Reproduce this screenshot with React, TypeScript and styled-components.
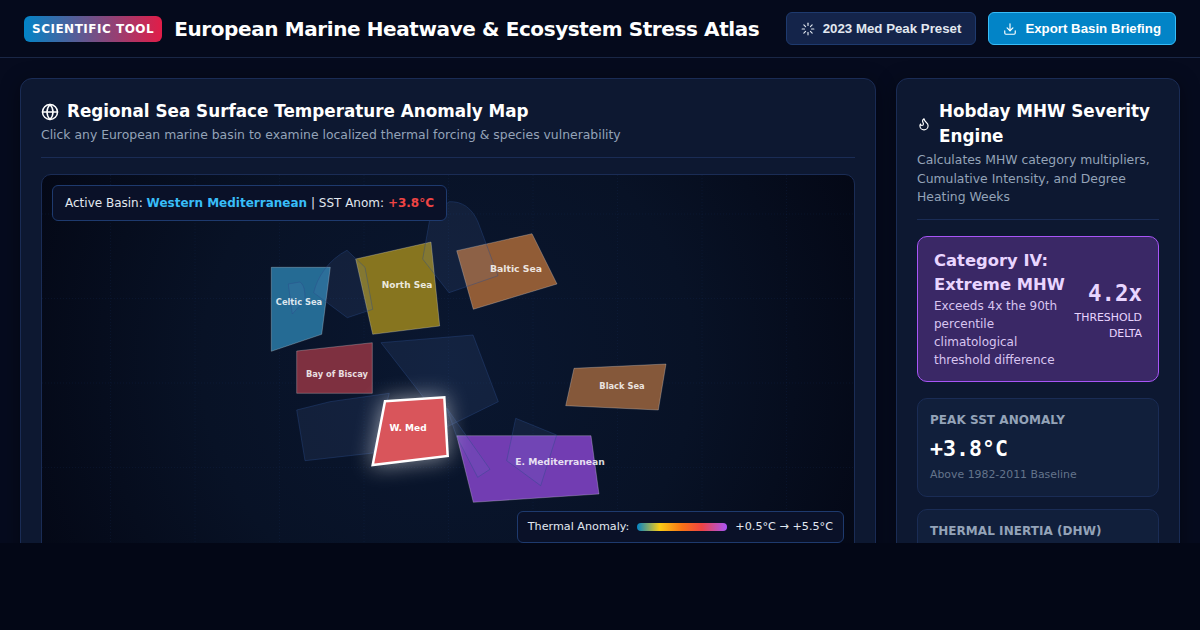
import React from 'react'
import styled, { createGlobalStyle } from 'styled-components'
import { Download, Flame, Globe, Loader } from 'lucide-react'

const GlobalStyle = createGlobalStyle`
  html, body {
    margin: 0;
    background: #030716;
  }
  * { box-sizing: border-box; }
`

const Shell = styled.div`
  height: 543px;
  overflow: hidden;
  background: #060b1e;
  color: #f1f5f9;
  font-family: "DejaVu Sans", sans-serif;
`

const Header = styled.header`
  display: flex;
  align-items: center;
  justify-content: space-between;
  height: 58px;
  padding: 0 24px;
  background: #050a1c;
  border-bottom: 1px solid #1a2746;
`

const Brand = styled.div`
  display: flex;
  align-items: center;
  gap: 12px;
  white-space: nowrap;
`

const Badge = styled.span`
  padding: 5px 8px;
  border-radius: 6px;
  background: linear-gradient(90deg, #0284c7, #e11d48);
  color: #fff;
  font-size: 12px;
  line-height: 16px;
  font-weight: 700;
  letter-spacing: 0.5px;
`

const Title = styled.h1`
  margin: 0;
  font-size: 20px;
  letter-spacing: -0.4px;
  font-weight: 700;
  color: #fff;
`

const Actions = styled.div`
  display: flex;
  gap: 12px;
`

const Button = styled.button<{ $primary?: boolean }>`
  display: flex;
  align-items: center;
  gap: 8px;
  height: 33px;
  padding: 0 14px;
  border-radius: 6px;
  border: 1px solid ${p => (p.$primary ? '#38bdf8' : '#1e3a6e')};
  background: ${p => (p.$primary ? '#0284c7' : '#14244a')};
  color: ${p => (p.$primary ? '#fff' : '#e2e8f0')};
  font-family: "Liberation Sans", Arial, sans-serif;
  font-size: 13.28px;
  font-weight: 700;
  white-space: nowrap;
`

const Main = styled.main`
  display: grid;
  grid-template-columns: 856px 284px;
  gap: 20px;
  padding: 20px;
`

const Card = styled.section`
  padding: 20px;
  border-radius: 12px;
  border: 1px solid #1a2c55;
  background: #0d1831;
  box-shadow: 0 4px 20px rgba(0, 0, 0, 0.4);
  height: 620px;
`

const CardHead = styled.div`
  padding-bottom: 12px;
  margin-bottom: 16px;
  border-bottom: 1px solid #1a2c55;
`

const CardTitle = styled.h2`
  display: flex;
  align-items: center;
  gap: 8px;
  margin: 0 0 2px;
  font-size: 16.8px;
  line-height: 25px;
  font-weight: 700;
  color: #fff;
`

const CardSub = styled.p`
  margin: 0;
  font-size: 12.4px;
  line-height: 18.6px;
  color: #94a3b8;
`

const MapCanvas = styled.div`
  position: relative;
  height: 380px;
  border-radius: 10px;
  border: 1px solid #1a2c55;
  overflow: hidden;
  background: radial-gradient(circle at 50% 50%, #0a1730 0%, #081226 55%, #040816 100%);
`

const MapSvg = styled.svg`
  display: block;
  width: 100%;
  height: 100%;
`

const BasinLabel = styled.text<{ $active?: boolean; $size: number }>`
  font-size: ${p => p.$size}px;
  font-weight: 700;
  fill: #fff;
  fill-opacity: ${p => (p.$active ? 1 : 0.85)};
  text-anchor: middle;
`

const ActiveTag = styled.div`
  position: absolute;
  top: 10px;
  left: 10px;
  padding: 9px 12px;
  border-radius: 6px;
  border: 1px solid #1e3a6e;
  background: #0a1128;
  font-size: 12px;
  line-height: 16px;
  color: #e2e8f0;
`

const BasinName = styled.strong`
  color: #38bdf8;
`

const AnomValue = styled.strong`
  color: #ef4444;
`

const Legend = styled.div`
  position: absolute;
  right: 10px;
  bottom: 10px;
  display: flex;
  align-items: center;
  gap: 8px;
  height: 32px;
  padding: 0 10px;
  border-radius: 6px;
  border: 1px solid #1e3a6e;
  background: #0a1128;
  font-size: 11.2px;
  color: #e2e8f0;
`

const LegendBar = styled.span`
  width: 90px;
  height: 8px;
  border-radius: 4px;
  background: linear-gradient(90deg, #0284c7, #facc15 25%, #f97316 50%, #ef4444 72%, #a855f7);
`

const SeverityBox = styled.div`
  display: flex;
  align-items: center;
  gap: 8px;
  padding: 12px 16px;
  margin-bottom: 16px;
  border-radius: 10px;
  border: 1px solid #a855f7;
  background: #3a2866;
`

const SeverityText = styled.div`
  flex: 1;
`

const SeverityTitle = styled.div`
  font-size: 16.4px;
  line-height: 24px;
  font-weight: 700;
  color: #e9d5ff;
`

const SeverityDesc = styled.div`
  font-size: 12px;
  line-height: 18px;
  color: #d8c5f0;
`

const SeverityFigure = styled.div`
  flex: 0 0 67px;
  text-align: right;
  font-size: 10.9px;
  line-height: 16px;
  color: #e9d5ff;
`

const FigureValue = styled.div`
  margin-top: 1px;
  font-family: "DejaVu Sans Mono", monospace;
  font-size: 22.4px;
  line-height: 33px;
  font-weight: 700;
`

const Stat = styled.div`
  padding: 13px 12px;
  margin-bottom: 12px;
  border-radius: 10px;
  border: 1px solid #1a2c55;
  background: #111f3b;
`

const StatLabel = styled.div`
  font-size: 12px;
  line-height: 16px;
  font-weight: 700;
  letter-spacing: 0.05px;
  color: #94a3b8;
`

const StatValue = styled.div`
  margin: 6px 0 3px;
  font-family: "DejaVu Sans Mono", monospace;
  font-size: 21.6px;
  line-height: 30px;
  font-weight: 700;
  color: #fff;
`

const StatNote = styled.div`
  font-size: 10.9px;
  line-height: 16px;
  color: #64748b;
`

type Shape = { points: string; fill: string; label: string; x: number; y: number; size: number }

// page coordinates, the svg viewBox is offset to match
const basins: Shape[] = [
  { points: '271.3,267.3 330.3,267.3 321.7,334.3 271.3,351.3', fill: '#256b94', label: 'Celtic Sea', x: 299, y: 305, size: 8.3 },
  { points: '355.7,259 431,242 439.7,326 372.7,334.3', fill: '#87751f', label: 'North Sea', x: 407, y: 288, size: 9 },
  { points: '456.7,250.7 532,233.7 557,284 473.3,309.3', fill: '#915c36', label: 'Baltic Sea', x: 516, y: 272, size: 9.3 },
  { points: '296.7,351 372.3,342.7 372.3,393.3 296.7,393.3', fill: '#7e3040', label: 'Bay of Biscay', x: 337, y: 377, size: 8.3 },
  { points: '574,368.3 666,364 658.3,410 565.7,405.7', fill: '#85583a', label: 'Black Sea', x: 622, y: 389, size: 8.3 },
  { points: '456.7,435.7 591,435.7 599,494 473.3,502.3', fill: '#723db2', label: 'E. Mediterranean', x: 560, y: 465, size: 9.2 },
]

const land = [
  'M449 201.7 C462 201 472 208 478 222 L498 275.7 L449 292.7 L422.7 259 L430 218 Z',
  'M347 250.3 L365 267.3 L372.7 309.3 L347.3 317.7 L313.7 292.7 C317 278 328 260 347 250.3 Z',
  'M288.3 284 L300 282 C304 285 305 290 305 300 L292.3 314 Z',
  'M381 342.7 L473 335 L498.3 401.7 L446.7 427 L423 396.7 Z',
  'M296.7 410 L330 401.7 L389.3 393.3 L373 453 L305 460.7 Z',
  'M446.7 408 L490 469.3 L477.7 477.3 L456.7 436.7 Z',
  'M515.7 418.3 L556.7 435 L540.7 485.7 L506.7 460.7 Z',
]

const gridLines = Array.from({ length: 10 }, (_, i) => 110.5 + i * 84.5)
const gridRows = Array.from({ length: 4 }, (_, i) => 214 + i * 84.5)

function App() {
  return (<>
    <GlobalStyle />
    <Shell>
      <Header>
        <Brand>
          <Badge>SCIENTIFIC TOOL</Badge>
          <Title>European Marine Heatwave &amp; Ecosystem Stress Atlas</Title>
        </Brand>
        <Actions>
          <Button><Loader size={14} />2023 Med Peak Preset</Button>
          <Button $primary><Download size={14} />Export Basin Briefing</Button>
        </Actions>
      </Header>
      <Main>
        <Card>
          <CardHead>
            <CardTitle><Globe size={18} />Regional Sea Surface Temperature Anomaly Map</CardTitle>
            <CardSub>Click any European marine basin to examine localized thermal forcing &amp; species vulnerability</CardSub>
          </CardHead>
          <MapCanvas>
            <MapSvg viewBox="42 175 812 378">
              {gridLines.map(x => <line key={x} x1={x} x2={x} y1={175} y2={553} stroke="#1e3a6e" strokeOpacity={0.18} strokeDasharray="1 2" />)}
              {gridRows.map(y => <line key={y} x1={42} x2={854} y1={y} y2={y} stroke="#1e3a6e" strokeOpacity={0.18} strokeDasharray="1 2" />)}
              {basins.map(b => <polygon key={b.label} points={b.points} fill={b.fill} stroke="#fff" strokeOpacity={0.25} />)}
              {land.map(d => <path key={d} d={d} fill="#6f8fd8" fillOpacity={0.1} stroke="#2a4a8a" strokeOpacity={0.4} />)}
              {basins.map(b => <BasinLabel key={b.label} x={b.x} y={b.y} $size={b.size}>{b.label}</BasinLabel>)}
              <polygon
                points="385,401.3 444.3,397.3 447.7,456 372.7,465"
                fill="#d9555b"
                stroke="#fff"
                strokeWidth={2.5}
                style={{ filter: 'drop-shadow(0 0 11px rgba(255,255,255,0.55))' }}
              />
              <BasinLabel $active $size={9} x={408} y={431}>W. Med</BasinLabel>
            </MapSvg>
            <ActiveTag>Active Basin: <BasinName>Western Mediterranean</BasinName> | SST Anom: <AnomValue>+3.8°C</AnomValue></ActiveTag>
            <Legend>Thermal Anomaly: <LegendBar /> +0.5°C → +5.5°C</Legend>
          </MapCanvas>
        </Card>
        <Card>
          <CardHead>
            <CardTitle><Flame size={14} style={{ flexShrink: 0 }} />Hobday MHW Severity Engine</CardTitle>
            <CardSub>Calculates MHW category multipliers, Cumulative Intensity, and Degree Heating Weeks</CardSub>
          </CardHead>
          <SeverityBox>
            <SeverityText>
              <SeverityTitle>Category IV: Extreme MHW</SeverityTitle>
              <SeverityDesc>Exceeds 4x the 90th percentile climatological threshold difference</SeverityDesc>
            </SeverityText>
            <SeverityFigure>
              <FigureValue>4.2x</FigureValue>
              THRESHOLD DELTA
            </SeverityFigure>
          </SeverityBox>
          <Stat>
            <StatLabel>PEAK SST ANOMALY</StatLabel>
            <StatValue>+3.8°C</StatValue>
            <StatNote>Above 1982-2011 Baseline</StatNote>
          </Stat>
          <Stat>
            <StatLabel>THERMAL INERTIA (DHW)</StatLabel>
          </Stat>
        </Card>
      </Main>
    </Shell>
  </>)
}

export default App
